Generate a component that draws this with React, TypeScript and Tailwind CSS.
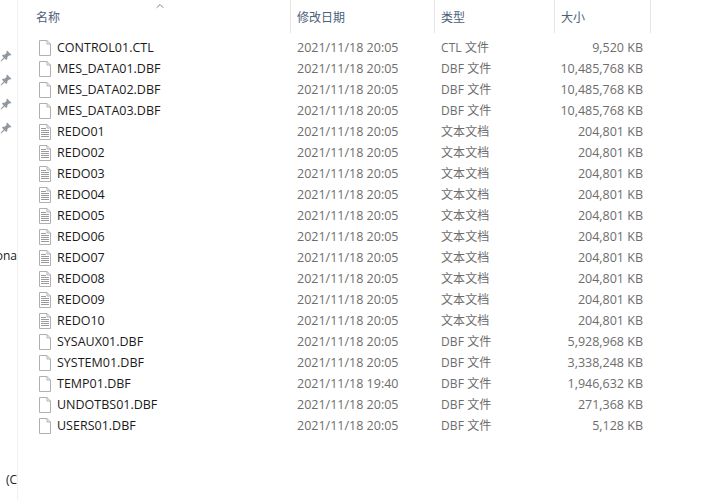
import { ChevronUp } from 'lucide-react';

const FONT = '"Open Sans", "Noto Sans CJK SC", sans-serif';

type FileRow = { name: string; date: string; type: string; size: string; kind: 'blank' | 'text' };

const TEXT_TYPE = '文本文档';

const files: FileRow[] = [
  { name: 'CONTROL01.CTL', date: '2021/11/18 20:05', type: 'CTL 文件', size: '9,520 KB', kind: 'blank' },
  { name: 'MES_DATA01.DBF', date: '2021/11/18 20:05', type: 'DBF 文件', size: '10,485,768 KB', kind: 'blank' },
  { name: 'MES_DATA02.DBF', date: '2021/11/18 20:05', type: 'DBF 文件', size: '10,485,768 KB', kind: 'blank' },
  { name: 'MES_DATA03.DBF', date: '2021/11/18 20:05', type: 'DBF 文件', size: '10,485,768 KB', kind: 'blank' },
  { name: 'REDO01', date: '2021/11/18 20:05', type: TEXT_TYPE, size: '204,801 KB', kind: 'text' },
  { name: 'REDO02', date: '2021/11/18 20:05', type: TEXT_TYPE, size: '204,801 KB', kind: 'text' },
  { name: 'REDO03', date: '2021/11/18 20:05', type: TEXT_TYPE, size: '204,801 KB', kind: 'text' },
  { name: 'REDO04', date: '2021/11/18 20:05', type: TEXT_TYPE, size: '204,801 KB', kind: 'text' },
  { name: 'REDO05', date: '2021/11/18 20:05', type: TEXT_TYPE, size: '204,801 KB', kind: 'text' },
  { name: 'REDO06', date: '2021/11/18 20:05', type: TEXT_TYPE, size: '204,801 KB', kind: 'text' },
  { name: 'REDO07', date: '2021/11/18 20:05', type: TEXT_TYPE, size: '204,801 KB', kind: 'text' },
  { name: 'REDO08', date: '2021/11/18 20:05', type: TEXT_TYPE, size: '204,801 KB', kind: 'text' },
  { name: 'REDO09', date: '2021/11/18 20:05', type: TEXT_TYPE, size: '204,801 KB', kind: 'text' },
  { name: 'REDO10', date: '2021/11/18 20:05', type: TEXT_TYPE, size: '204,801 KB', kind: 'text' },
  { name: 'SYSAUX01.DBF', date: '2021/11/18 20:05', type: 'DBF 文件', size: '5,928,968 KB', kind: 'blank' },
  { name: 'SYSTEM01.DBF', date: '2021/11/18 20:05', type: 'DBF 文件', size: '3,338,248 KB', kind: 'blank' },
  { name: 'TEMP01.DBF', date: '2021/11/18 19:40', type: 'DBF 文件', size: '1,946,632 KB', kind: 'blank' },
  { name: 'UNDOTBS01.DBF', date: '2021/11/18 20:05', type: 'DBF 文件', size: '271,368 KB', kind: 'blank' },
  { name: 'USERS01.DBF', date: '2021/11/18 20:05', type: 'DBF 文件', size: '5,128 KB', kind: 'blank' },
];

function FileIcon({ kind }: { kind: 'blank' | 'text' }) {
  return (
    <svg width="14" height="16" viewBox="0 0 14 16" fill="none" className="shrink-0">
      <path d="M1.5 0.5H9L12.5 4V15.5H1.5Z" fill="#fff" stroke="#b0b0b0" />
      <path d="M9 0.5V4H12.5" stroke="#b0b0b0" />
      {kind === 'text' && (
        <path d="M3 4.5H8M3 6.5H11M3 8.5H11M3 10.5H11M3 12.5H11" stroke="#9a9a9a" />
      )}
    </svg>
  );
}

function PinIcon() {
  return (
    <svg width="12" height="12" viewBox="0 0 12 12" fill="#8f979f" className="shrink-0">
      <path d="M7 0.5L11.5 5L10.4 5.6L9.3 5.3L7.3 7.3L7.2 9.2L6.2 10L2 5.8L2.8 4.8L4.7 4.7L6.7 2.7L6.4 1.6Z" />
      <path d="M3.6 7.4L4.6 8.4L1 11.5L0.5 11Z" />
    </svg>
  );
}

function HeaderCell({ label, width, pad }: { label: string; width: string; pad: string }) {
  return (
    <div className={`flex h-[33px] items-center border-r border-[#e5e5e5] pt-[2px] text-xs text-[#4c607a] ${width} ${pad}`}>
      {label}
    </div>
  );
}

export default function App() {
  return (
    <div className="flex h-[500px] w-[717px] overflow-hidden bg-white" style={{ fontFamily: FONT }}>
      {/* Nav pane, cut off at the left edge */}
      <aside className="flex w-[18px] shrink-0 flex-col items-end overflow-hidden border-r border-[#f0f0f0]">
        <div className="flex h-[140px] w-full shrink-0 flex-col items-end gap-3 pt-[50px] pr-[5px]">
          <PinIcon />
          <PinIcon />
          <PinIcon />
          <PinIcon />
        </div>
        <div className="mt-[108px] w-full whitespace-nowrap text-xs leading-4 text-[#222] [direction:rtl]">ona</div>
        <div className="mt-[208px] w-full text-right text-xs leading-4 text-[#222]">(C</div>
      </aside>

      <main className="flex min-w-0 flex-col">
        <div className="relative flex">
          <HeaderCell label="名称" width="w-[273px]" pad="pl-[18px]" />
          <HeaderCell label="修改日期" width="w-[144px]" pad="pl-[6px]" />
          <HeaderCell label="类型" width="w-[120px]" pad="pl-[6px]" />
          <HeaderCell label="大小" width="w-[96px]" pad="pl-[6px]" />
          <ChevronUp className="absolute left-[136px] top-0 h-3 w-3 text-[#6b6b6b]" strokeWidth={1.75} />
        </div>

        <div className="flex flex-col pt-[4px]">
          {files.map((file) => (
            <div key={file.name} className="flex h-[21px] items-center text-[12.5px]">
              <div className="flex w-[273px] items-center gap-[5px] pl-[20px] text-[#1a1a1a]">
                <FileIcon kind={file.kind} />
                <span className="pt-[2px]">{file.name}</span>
              </div>
              <div className="w-[144px] pt-[2px] pl-[6px] text-[#6d6d6d]">{file.date}</div>
              <div className="w-[120px] pl-[6px] text-xs tracking-[0.1px] text-[#6d6d6d]">{file.type}</div>
              <div className="w-[88px] pt-[2px] text-right text-[#6d6d6d]">{file.size}</div>
            </div>
          ))}
        </div>
      </main>
    </div>
  );
}
